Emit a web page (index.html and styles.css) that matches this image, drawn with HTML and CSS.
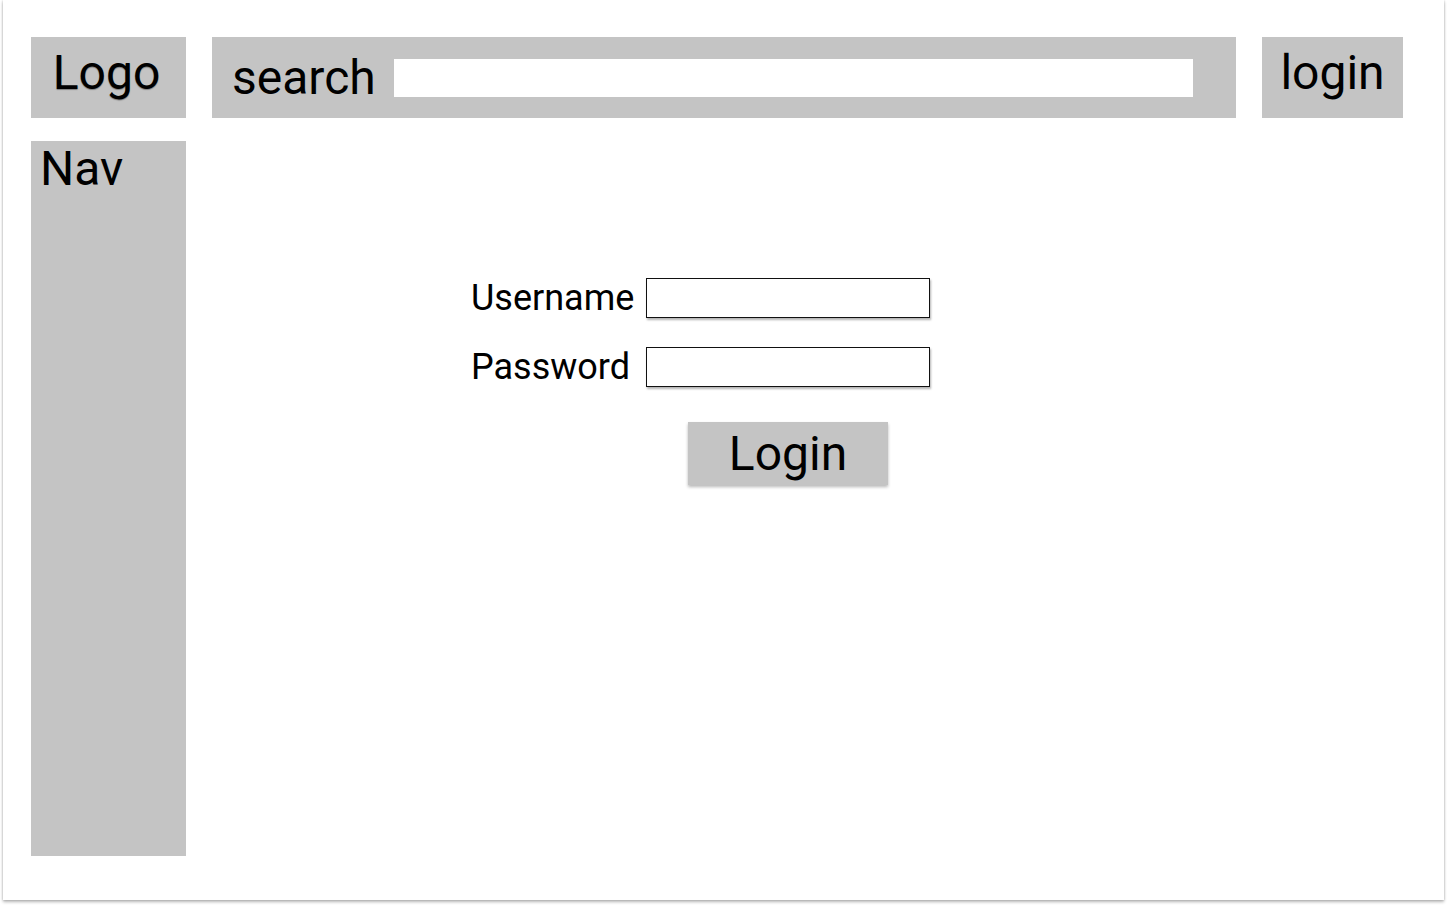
FILE: index.html
```html
<!DOCTYPE html>
<html lang="en">
<head>
<meta charset="utf-8">
<title>Login wireframe</title>
<link rel="stylesheet" href="styles.css">
</head>
<body>
<div class="frame">
  <div class="layout">
    <div class="box logo">Logo</div>
    <div class="box searchbar">
      <span class="search-label">search</span>
      <div class="search-input"></div>
    </div>
    <div class="box top-login">login</div>
    <div class="box nav">Nav</div>
    <main class="main">
      <form class="login-form">
        <label class="field-label" for="user">Username</label>
        <input class="field" id="user" type="text">
        <label class="field-label" for="pass">Password</label>
        <input class="field" id="pass" type="password">
        <button class="login-btn" type="button">Login</button>
      </form>
    </main>
  </div>
</div>
</body>
</html>
```

FILE: styles.css
```css
html, body {
  margin: 0;
  padding: 0;
  background: #ffffff;
}

body {
  font-family: Roboto, "Liberation Sans", Arial, sans-serif;
  color: #000;
  width: 1448px;
  height: 908px;
  overflow: hidden;
}

.frame {
  margin-left: 3px;
  width: 1441px;
  height: 900px;
  background: #fff;
  box-shadow: 0 2px 3px rgba(0, 0, 0, 0.28), 0 0 2px rgba(0, 0, 0, 0.18);
  box-sizing: border-box;
  padding: 37px 0 0 28px;
}

.layout {
  display: grid;
  grid-template-columns: 155px 1024px 141px;
  grid-template-rows: 81px 715px;
  column-gap: 26px;
  row-gap: 23px;
}

.box {
  background: #c4c4c4;
  font-size: 48px;
  line-height: 56px;
}

.logo {
  text-align: center;
  padding-top: 8px;
  padding-right: 4px;
  text-shadow: 0 1px 1px rgba(0, 0, 0, 0.35);
}

.top-login {
  text-align: center;
  padding-top: 8px;
}

.searchbar {
  display: flex;
  align-items: center;
  padding: 0 43px 0 20px;
  gap: 18px;
}

.search-input {
  flex: 1;
  height: 38px;
  background: #fff;
}

.nav {
  padding-left: 9px;
}

.main {
  grid-column: 2 / 4;
  padding: 137px 0 0 259px;
}

.login-form {
  display: grid;
  grid-template-columns: 162px 284px;
  column-gap: 13px;
  row-gap: 29px;
  align-items: center;
}

.field-label {
  font-size: 36px;
  line-height: 40px;
  white-space: nowrap;
}

.field {
  box-sizing: border-box;
  width: 284px;
  height: 40px;
  margin: 0;
  padding: 0 6px;
  border: 1px solid #111;
  background: #fff;
  box-shadow: 1px 2px 2px rgba(0, 0, 0, 0.3);
  font: inherit;
  font-size: 20px;
  outline: none;
}

.login-btn {
  grid-column: 2;
  justify-self: center;
  margin-top: 6px;
  width: 200px;
  height: 63px;
  padding: 0;
  border: none;
  background: #c4c4c4;
  box-shadow: 0 2px 3px rgba(0, 0, 0, 0.28);
  font-family: Roboto, "Liberation Sans", Arial, sans-serif;
  font-size: 48px;
  line-height: 56px;
  color: #000;
}
```
